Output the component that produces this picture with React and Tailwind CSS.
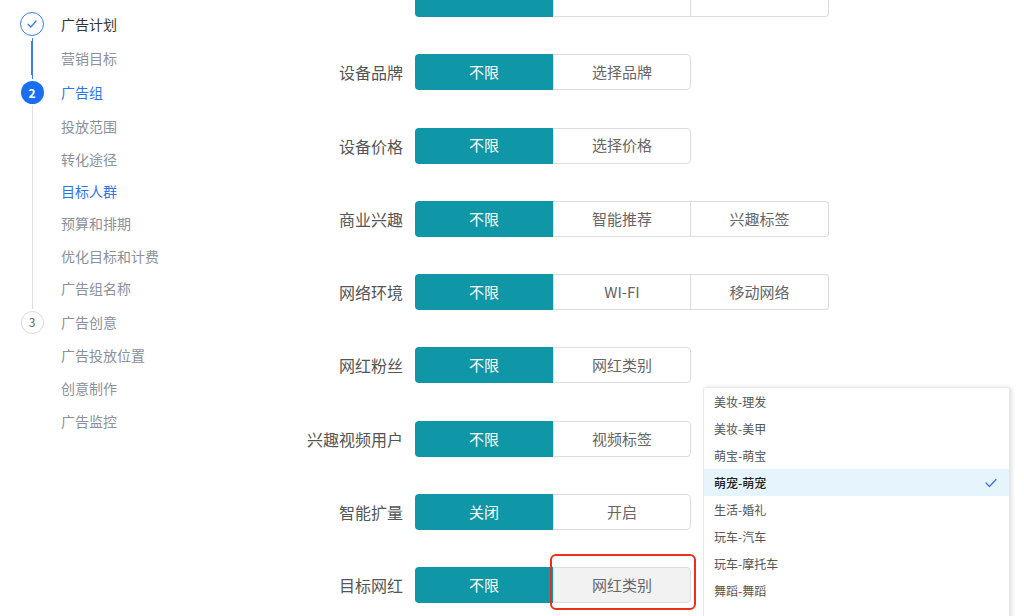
import React from 'react';

const navItems = [
  { label: '广告计划', step: 'done', h: 34, color: 'text-[#333]' },
  { label: '营销目标', line: 'blue', h: 34 },
  { label: '广告组', step: 'active', h: 35, num: 2, color: 'text-[#2f74e6]' },
  { label: '投放范围', line: 'grey', h: 33 },
  { label: '转化途径', line: 'grey', h: 32 },
  { label: '目标人群', line: 'grey', h: 32, color: 'text-[#2f74e6]' },
  { label: '预算和排期', line: 'grey', h: 33 },
  { label: '优化目标和计费', line: 'grey', h: 32 },
  { label: '广告组名称', line: 'grey', h: 33 },
  { label: '广告创意', step: 'todo', h: 34, num: 3 },
  { label: '广告投放位置', h: 33 },
  { label: '创意制作', h: 33 },
  { label: '广告监控', h: 33 },
];

// first row is scrolled mostly out of view, only the bottom of its buttons shows
const rows = [
  { label: '', options: ['', '', ''] },
  { label: '设备品牌', options: ['不限', '选择品牌'] },
  { label: '设备价格', options: ['不限', '选择价格'] },
  { label: '商业兴趣', options: ['不限', '智能推荐', '兴趣标签'] },
  { label: '网络环境', options: ['不限', 'WI-FI', '移动网络'] },
  { label: '网红粉丝', options: ['不限', '网红类别'] },
  { label: '兴趣视频用户', options: ['不限', '视频标签'] },
  { label: '智能扩量', options: ['关闭', '开启'] },
  { label: '目标网红', options: ['不限', '网红类别'], highlight: true },
];

const dropdownItems = [
  '美妆-理发',
  '美妆-美甲',
  '萌宝-萌宝',
  '萌宠-萌宠',
  '生活-婚礼',
  '玩车-汽车',
  '玩车-摩托车',
  '舞蹈-舞蹈',
];

function StepMarker({ item, prevLine, nextLine }) {
  if (item.step) {
    const lineColor = (c) => (c === 'blue' ? 'bg-[#3b7ee8]' : c === 'grey' ? 'bg-[#dcdfe4]' : 'bg-transparent');
    return (
      <div className="flex flex-col items-center h-full">
        <div className={`w-px flex-1 ${lineColor(prevLine)}`} />
        <div className="my-[2px]">
          {item.step === 'done' && (
            <div className="w-[24px] h-[24px] rounded-full border border-[#3b7ee8] flex items-center justify-center">
              <svg width="12" height="12" viewBox="0 0 12 12" fill="none">
                <path d="M2 6.2 L4.8 9 L10 3" stroke="#3b7ee8" strokeWidth="1.3" strokeLinecap="round" strokeLinejoin="round" />
              </svg>
            </div>
          )}
          {item.step === 'active' && (
            <div className="w-[23px] h-[23px] rounded-full bg-[#1a6ff0] flex items-center justify-center text-white text-[12px] font-bold">
              {item.num}
            </div>
          )}
          {item.step === 'todo' && (
            <div className="w-[23px] h-[23px] rounded-full border border-[#d6d9de] bg-white flex items-center justify-center text-[#666] text-[12px]">
              {item.num}
            </div>
          )}
        </div>
        <div className={`w-px flex-1 ${lineColor(nextLine)}`} />
      </div>
    );
  }
  return (
    <div className="flex justify-center h-full">
      {item.line === 'blue' && <div className="w-[1.5px] h-full bg-[#3b7ee8]" />}
      {item.line === 'grey' && <div className="w-px h-full bg-[#dcdfe4]" />}
    </div>
  );
}

function Sidebar() {
  return (
    <aside className="w-[200px] shrink-0 pt-[7px] pl-[20px]">
      {navItems.map((item, i) => {
        const prev = navItems[i - 1];
        const next = navItems[i + 1];
        return (
          <div key={item.label} className="flex items-stretch" style={{ height: item.h }}>
            <div className="w-[24px] shrink-0">
              <StepMarker item={item} prevLine={prev && prev.line} nextLine={next && next.line} />
            </div>
            <div className={`ml-[17px] flex items-center text-[14px] ${item.color || 'text-[#8c9099]'}`}>
              {item.label}
            </div>
          </div>
        );
      })}
    </aside>
  );
}

function OptionGroup({ options, highlight }) {
  return (
    <div className="flex">
      {options.map((opt, i) => {
        const first = i === 0;
        const last = i === options.length - 1;
        const pressed = highlight && i === 1;
        return (
          <div key={i} className="relative">
            <div
              className={`w-[138px] h-[36px] flex items-center justify-center text-[15px] ${
                first
                  ? 'bg-[#0f97a8] text-white rounded-l-[4px]'
                  : `${pressed ? 'bg-[#f2f2f2]' : 'bg-white'} text-[#666] border border-[#dcdcdc] ${i > 1 ? 'border-l-0' : ''}`
              } ${last ? 'rounded-r-[4px]' : ''}`}
            >
              {opt}
            </div>
            {pressed && (
              <div className="absolute -left-[3px] -top-[13px] w-[146px] h-[56px] border-2 border-[#e8301c] rounded-[6px]" />
            )}
          </div>
        );
      })}
    </div>
  );
}

function Dropdown() {
  return (
    <div className="absolute left-[703px] top-[387px] w-[307px] h-[240px] bg-white border border-[#e6e8eb] rounded-[3px] shadow-[2px_0_4px_rgba(0,0,0,0.12)]">
      {dropdownItems.map((it) => {
        const selected = it === '萌宠-萌宠';
        return (
          <div
            key={it}
            className={`h-[27px] flex items-center justify-between pl-[10px] pr-[12px] text-[12px] ${
              selected ? 'bg-[#e6f4fd] text-[#222] font-medium' : 'text-[#555]'
            }`}
          >
            <span>{it}</span>
            {selected && (
              <svg width="12" height="10" viewBox="0 0 12 10" fill="none">
                <path d="M1 5 L4.5 8.5 L11 1.5" stroke="#3d6fd8" strokeWidth="1.2" strokeLinecap="round" strokeLinejoin="round" />
              </svg>
            )}
          </div>
        );
      })}
    </div>
  );
}

export default function App() {
  return (
    <div
      className="relative w-[1024px] h-[616px] overflow-hidden bg-white flex"
      style={{ fontFamily: '"Noto Sans CJK SC", "Noto Sans", sans-serif' }}
    >
      <Sidebar />

      <main className="flex-1">
        <div className="-mt-[19px] flex flex-col gap-[37.3px]">
          {rows.map((row, i) => (
            <div key={i} className="flex items-center h-[36px]">
              <div className="w-[203px] text-right text-[16px] text-[#555]">{row.label}</div>
              <div className="ml-[12px]">
                <OptionGroup options={row.options} highlight={row.highlight} />
              </div>
            </div>
          ))}
        </div>
      </main>

      <Dropdown />
    </div>
  );
}
